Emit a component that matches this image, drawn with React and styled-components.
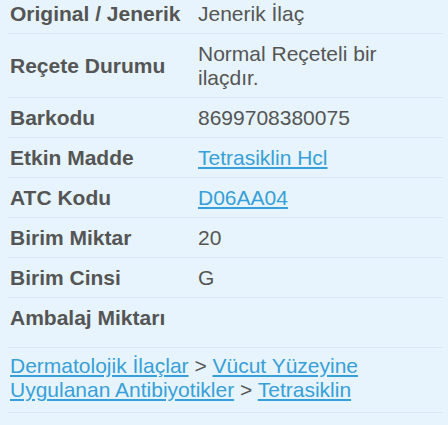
import React from "react";
import styled, { createGlobalStyle } from "styled-components";

const rows = [
  { label: "Original / Jenerik", value: "Jenerik İlaç" },
  { label: "Reçete Durumu", value: "Normal Reçeteli bir ilaçdır." },
  { label: "Barkodu", value: "8699708380075" },
  { label: "Etkin Madde", value: "Tetrasiklin Hcl", link: true },
  { label: "ATC Kodu", value: "D06AA04", link: true },
  { label: "Birim Miktar", value: "20" },
  { label: "Birim Cinsi", value: "G" },
  { label: "Ambalaj Miktarı", value: "", tall: true },
];

const crumbs = ["Dermatolojik İlaçlar", "Vücut Yüzeyine Uygulanan Antibiyotikler", "Tetrasiklin"];

const App = () => {
  return (
    <Page>
      <GlobalStyle />
      <Table>
        {rows.map((r) => (
          <Row key={r.label} $tall={r.tall}>
            <Label>{r.label}</Label>
            <Value>{r.link ? <Link href="#">{r.value}</Link> : r.value}</Value>
          </Row>
        ))}
        <Crumbs>
          {crumbs.map((c, i) => (
            <React.Fragment key={c}>
              {i > 0 && " > "}
              <Link href="#">{c}</Link>
            </React.Fragment>
          ))}
        </Crumbs>
      </Table>
    </Page>
  );
};

//Styled Component
const GlobalStyle = createGlobalStyle`
  html, body {
    margin: 0;
    background: #e7f4fd;
  }
`;

const Page = styled.div`
  height: 425px;
  overflow: hidden;
  padding: 0 5px 0 8px;
  font-family: "Liberation Sans", Arial, sans-serif;
  font-size: 21px;
  line-height: 24px;
  color: #555;
`;

const Table = styled.div`
  margin-top: -6px;
`;

const Row = styled.div`
  display: grid;
  grid-template-columns: 188px 1fr;
  align-items: center;
  padding-bottom: ${(p) => (p.$tall ? "10px" : "0")};
  border-bottom: 1px solid #d9e8f3;
`;

const Label = styled.div`
  padding: 8px 2px 7px;
  font-weight: bold;
`;

const Value = styled.div`
  padding: 8px 10px 7px 2px;
  min-height: 24px;
`;

const Link = styled.a`
  color: #38a0d8;
  text-decoration: underline;
  text-decoration-thickness: 2px;
  text-underline-offset: 2px;
`;

const Crumbs = styled.div`
  padding: 6px 2px 10px;
  border-bottom: 1px solid #d9e8f3;
`;

export default App;
